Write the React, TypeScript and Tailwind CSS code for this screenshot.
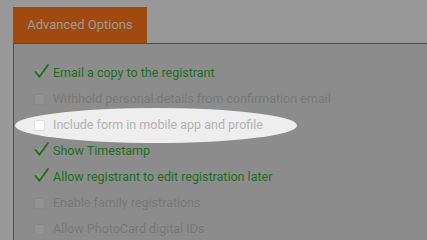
import React from "react";

const options = [
  { label: "Email a copy to the registrant", checked: true },
  { label: "Withhold personal details from confirmation email", checked: false },
  { label: "Include form in mobile app and profile", checked: false, spot: true },
  { label: "Show Timestamp", checked: true },
  { label: "Allow registrant to edit registration later", checked: true },
  { label: "Enable family registrations", checked: false },
  { label: "Allow PhotoCard digital IDs", checked: false },
];

function Check() {
  return (
    <svg className="absolute -left-[1px] -top-[5px]" width="15" height="15" viewBox="0 0 14 14">
      <path d="M1.5 7.5 L5 12 L13 1" fill="none" stroke="#1e6e1e" strokeWidth="1.7" strokeLinecap="round" strokeLinejoin="round" />
    </svg>
  );
}

export default function App() {
  return (
    <div className="w-[427px] h-[240px] overflow-hidden bg-[#999999] pt-[7px] pl-[13px] font-['Roboto',sans-serif]">
      <div className="w-[134px] h-[36px] bg-[#a04a10] flex items-center justify-center text-[13px] text-[#9a9a9a]">
        Advanced Options
      </div>
      <div className="h-[200px] bg-[#8c8c8c] border-t border-l border-[#8a3c0c] pt-[16px] pl-[20px]">
        {options.map((o) => (
          <div key={o.label} className="relative h-[26px] flex items-center gap-[8px]">
            {o.spot && (
              <div className="absolute -left-[19px] top-[-4px] w-[282px] h-[35px] rounded-[50%] bg-[#eeeeee]" />
            )}
            <div
              className={`relative z-10 w-[11px] h-[11px] rounded-[2px] border ${
                o.spot ? "bg-white border-[#dddddd]" : "bg-[#929292] border-[#888888]"
              }`}
            >
              {o.checked && <Check />}
            </div>
            <span
              className={`relative z-10 text-[12.5px] leading-none ${
                o.checked ? "text-[#1e6e1e]" : o.spot ? "text-[#b3b3b3]" : "text-[#777777]"
              }`}
            >
              {o.label}
            </span>
          </div>
        ))}
      </div>
    </div>
  );
}
